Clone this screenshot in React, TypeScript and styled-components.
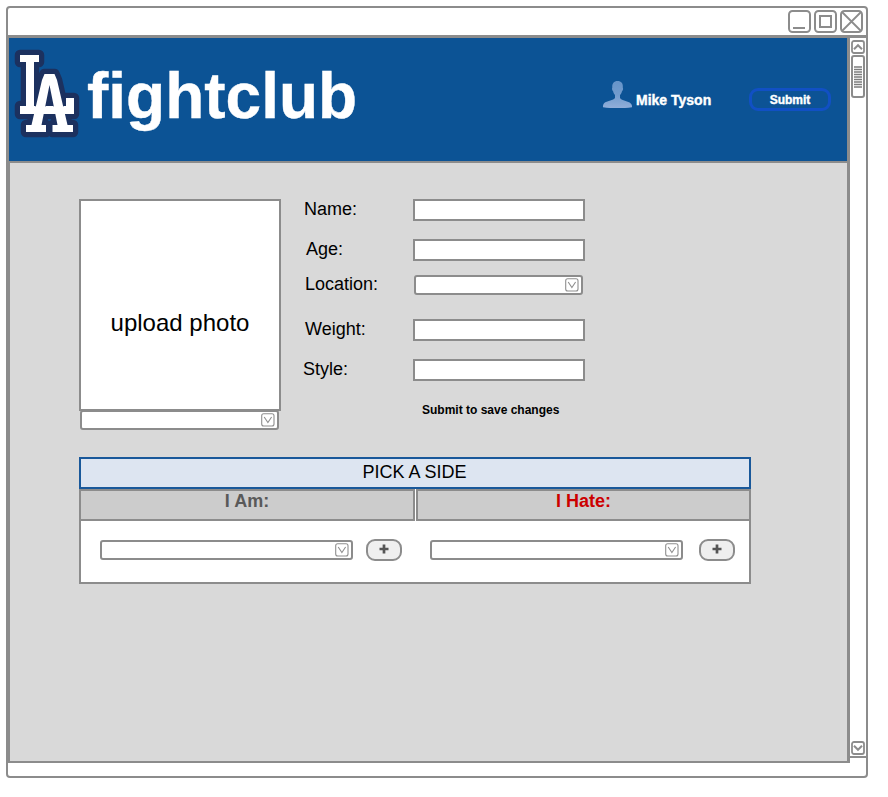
import React from 'react';
import styled, { createGlobalStyle } from 'styled-components';

const line = '#8c8c8c';

const GlobalStyle = createGlobalStyle`
  *, *::before, *::after { box-sizing: border-box; }
  html, body { margin: 0; background: #fff; }
  body { font-family: "Liberation Sans", Arial, sans-serif; color: #000; overflow: hidden; }
  svg { display: block; }
`;

const Window = styled.div`
  display: flex;
  flex-direction: column;
  width: 862px;
  height: 772px;
  margin: 6px 0 0 6px;
  border: 2px solid ${line};
  border-radius: 4px;
  background: #fff;
`;

const TitleBar = styled.div`
  display: flex;
  flex: none;
  justify-content: flex-end;
  gap: 3px;
  height: 30px;
  padding: 2px 3px 0 0;
  border-bottom: 3px solid ${line};
`;

const Frame = styled.div`
  display: flex;
  flex: none;
  align-items: flex-start;
`;

const Page = styled.div`
  display: flex;
  flex-direction: column;
  width: 842px;
  height: 725px;
  border: solid ${line};
  border-width: 0 3px 2px 2px;
  background: #d9d9d9;
`;

const Header = styled.header`
  display: flex;
  flex: none;
  height: 125px;
  margin-left: -1px;
  border-bottom: 2px solid ${line};
  background: #0c5395;
`;

const LogoSlot = styled.div`
  width: 66px;
  padding: 9px 0 0 5px;
`;

const Brand = styled.h1`
  width: 515px;
  margin: 21px 0 0 12px;
  color: #fff;
  font-size: 64px;
  line-height: 74px;
  font-weight: 700;
  -webkit-text-stroke: 0.4px #fff;
`;

const User = styled.div`
  display: flex;
  width: 147px;
  height: 36px;
  margin-top: 42px;
`;

const UserName = styled.span`
  margin: 11px 0 0 3px;
  color: #fff;
  font-size: 14px;
  line-height: 18px;
  font-weight: 700;
  white-space: nowrap;
  -webkit-text-stroke: 0.4px #fff;
`;

const SubmitButton = styled.button`
  width: 82px;
  height: 23px;
  margin: 50px 0 0;
  padding: 1px 0 0;
  border: 3px solid #1150c4;
  border-radius: 9px;
  background: transparent;
  color: #fff;
  font: 700 12px/17px "Liberation Sans", Arial, sans-serif;
  -webkit-text-stroke: 0.4px #fff;
`;

const Main = styled.main`
  display: flex;
  flex-direction: column;
  padding: 36px 0 0 69px;
`;

const Profile = styled.section`
  display: flex;
  height: 257.5px;
`;

const PhotoColumn = styled.div`
  display: flex;
  flex-direction: column;
  width: 202px;
`;

const Photo = styled.div`
  display: flex;
  justify-content: center;
  height: 212px;
  padding-top: 108px;
  border: 2px solid ${line};
  background: #fff;
  font-size: 24px;
  line-height: 28px;
`;

const SelectBox = styled.div<{ $width: number }>`
  display: flex;
  flex: none;
  justify-content: flex-end;
  align-items: center;
  width: ${(p) => p.$width}px;
  height: 20px;
  padding-right: 2px;
  border: 2px solid ${line};
  border-radius: 3px;
  background: #fff;
`;

const PhotoSelect = styled(SelectBox)`
  margin: -1px 0 0 1px;
`;

const Form = styled.div`
  display: flex;
  flex-direction: column;
  margin-left: 22px;
`;

const Row = styled.div<{ $height: number; $indent: number; $line?: number }>`
  display: grid;
  grid-template-columns: 110px auto;
  align-items: start;
  height: ${(p) => p.$height}px;

  > label {
    padding-left: ${(p) => p.$indent}px;
    font-size: 18px;
    line-height: ${(p) => p.$line ?? 20}px;
  }
`;

const TextField = styled.input`
  width: 171.5px;
  height: 22px;
  padding: 0 4px;
  border: 2px solid ${line};
  border-radius: 0;
  outline: none;
  background: #fff;
`;

const LocationSelect = styled(SelectBox)`
  margin-left: 1px;
`;

const Hint = styled.div`
  margin: 4px 0 0 119px;
  font-size: 12px;
  line-height: 14px;
  font-weight: 700;
`;

const Panel = styled.section`
  display: flex;
  flex-direction: column;
  width: 672px;
  height: 127px;
  background: #fff;
`;

const PanelTitle = styled.div`
  height: 32.5px;
  padding-right: 1px;
  border: 2px solid #19589a;
  background: #dde5f1;
  text-align: center;
  font-size: 18px;
  line-height: 27px;
`;

const SideHeaders = styled.div`
  display: grid;
  grid-template-columns: 336px 335px;
  gap: 1px;
`;

const SideHeader = styled.div<{ $color: string }>`
  height: 32px;
  border: 2px solid ${line};
  background: #ccc;
  color: ${(p) => p.$color};
  text-align: center;
  font-size: 18px;
  line-height: 20px;
  font-weight: 700;
`;

const Sides = styled.div`
  display: flex;
  flex: 1;
  align-items: flex-start;
  border: solid ${line};
  border-width: 0 2px 2px;
  padding: 18px 0 0 19px;
`;

const Side = styled.div<{ $gap: number; $width: number }>`
  display: flex;
  flex: none;
  align-items: center;
  gap: ${(p) => p.$gap}px;
  width: ${(p) => p.$width}px;
`;

const AddButton = styled.button`
  display: flex;
  flex: none;
  justify-content: center;
  width: 36px;
  height: 22px;
  padding: 3px 0 0;
  border: 2px solid ${line};
  border-radius: 9px;
  background: #efefef;
`;

const ScrollBar = styled.div`
  display: flex;
  flex-direction: column;
  align-items: center;
  width: 16px;
  height: 720px;
  padding: 2px 0 1px;
  border-bottom: 2px solid ${line};
`;

const Thumb = styled.div`
  display: flex;
  justify-content: center;
  width: 14px;
  height: 43px;
  margin: 1px 0 auto;
  padding-top: 9px;
  border: 2px solid ${line};
  border-radius: 3px;
`;

function LaLogo() {
  const letterL = 'M20 55H39V62H34V106H66V98H74V114H20V106H26V62H20Z';
  const letterA = 'M44.5 74H54.5L57 80L67.5 125H73V132H52.5V125H57.5L49.5 85L41.5 125H46V132H26V125H31.5L42 80Z';
  return (
    <svg width="66" height="92" viewBox="14 47 66 92" role="img" aria-label="LA">
      <g fill="#1c315f" stroke="#1c315f" strokeWidth="10.5" strokeLinejoin="round">
        <path d={letterL} />
        <path d={letterA} />
      </g>
      <path d={letterL} fill="#fff" />
      <path
        d={letterA}
        fill="#fff"
        stroke="#1c315f"
        strokeWidth="1"
        strokeLinejoin="round"
        paintOrder="stroke"
      />
      <path d="M20 106.5H74V114H20Z" fill="#fff" />
    </svg>
  );
}

function Avatar() {
  return (
    <svg width="31" height="30" viewBox="0 0 31 30" aria-hidden="true">
      <defs>
        <linearGradient id="avatar" x1="0" y1="0" x2="0" y2="1">
          <stop offset="0" stopColor="#6694c9" />
          <stop offset="0.5" stopColor="#719bcd" />
          <stop offset="1" stopColor="#91aed9" />
        </linearGradient>
      </defs>
      <path
        d="M15.5 1C12 1 9.9 3.4 10.3 7.5C9.7 8.4 10.2 10.5 11.1 11.2C11.5 13 12.2 14.2 13 15V18C11.5 20.3 5.5 21.1 2.9 22.6C1.2 23.8 .8 25.8 1 27.2C10 28.4 21 28.4 30 27.2C30.3 25.5 29.3 23.8 27.6 22.6C24.5 21.1 19.3 20.3 18 18V15C19.1 14 19.7 12.7 20 11.2C21 10.4 21.4 8.5 20.8 7.5C21.3 3.3 19.2 1 15.5 1Z"
        fill="url(#avatar)"
      />
    </svg>
  );
}

function WindowButton({ kind }: { kind: 'minimize' | 'maximize' | 'close' }) {
  return (
    <svg width="23" height="23" viewBox="0 0 23 23" fill="none" stroke={line} strokeWidth="2">
      <rect x="1" y="1" width="21" height="21" rx="3.5" />
      {kind === 'minimize' && <path d="M5 18H17" />}
      {kind === 'maximize' && <rect x="6" y="6" width="11" height="11" />}
      {kind === 'close' && <path d="M2 2L21 21M21 2L2 21" strokeWidth="1.8" />}
    </svg>
  );
}

function DropMark() {
  return (
    <svg width="14" height="14" viewBox="0 0 14 14" fill="none" stroke="#8f8f8f" strokeWidth="1.1">
      <rect x="0.7" y="0.7" width="12.3" height="12.3" rx="2" />
      <path d="M3.2 4L6.9 9.6L10.6 4" />
    </svg>
  );
}

function ScrollArrow({ down = false }: { down?: boolean }) {
  return (
    <svg width="14" height="14" viewBox="0 0 14 14" fill="none" stroke={line} strokeWidth="2">
      <rect x="1" y="1" width="12" height="12" rx="2" strokeWidth="1.8" />
      <path d={down ? 'M3 4.8L7 8.8L11 4.8' : 'M3 9.2L7 5.2L11 9.2'} />
    </svg>
  );
}

function Plus() {
  return (
    <svg width="10" height="10" viewBox="0 0 10 10" fill="none" stroke="#555" strokeWidth="2.7">
      <path d="M5 .5V9.5M.5 5H9.5" />
    </svg>
  );
}

export default function App() {
  return (
    <>
      <GlobalStyle />
      <Window>
        <TitleBar>
          <WindowButton kind="minimize" />
          <WindowButton kind="maximize" />
          <WindowButton kind="close" />
        </TitleBar>
        <Frame>
          <Page>
            <Header>
              <LogoSlot>
                <LaLogo />
              </LogoSlot>
              <Brand>fightclub</Brand>
              <User>
                <Avatar />
                <UserName>Mike Tyson</UserName>
              </User>
              <SubmitButton>Submit</SubmitButton>
            </Header>
            <Main>
              <Profile>
                <PhotoColumn>
                  <Photo>upload photo</Photo>
                  <PhotoSelect $width={199}>
                    <DropMark />
                  </PhotoSelect>
                </PhotoColumn>
                <Form>
                  <Row $height={40} $indent={1}>
                    <label htmlFor="name">Name:</label>
                    <TextField id="name" />
                  </Row>
                  <Row $height={36} $indent={3}>
                    <label htmlFor="age">Age:</label>
                    <TextField id="age" />
                  </Row>
                  <Row $height={44} $indent={2} $line={18}>
                    <label>Location:</label>
                    <LocationSelect $width={169}>
                      <DropMark />
                    </LocationSelect>
                  </Row>
                  <Row $height={40} $indent={2}>
                    <label htmlFor="weight">Weight:</label>
                    <TextField id="weight" />
                  </Row>
                  <Row $height={40} $indent={0}>
                    <label htmlFor="style">Style:</label>
                    <TextField id="style" />
                  </Row>
                  <Hint>Submit to save changes</Hint>
                </Form>
              </Profile>
              <Panel>
                <PanelTitle>PICK A SIDE</PanelTitle>
                <SideHeaders>
                  <SideHeader $color="#595959">I Am:</SideHeader>
                  <SideHeader $color="#cc0000">I Hate:</SideHeader>
                </SideHeaders>
                <Sides>
                  <Side $gap={13.5} $width={330}>
                    <SelectBox $width={252.5}>
                      <DropMark />
                    </SelectBox>
                    <AddButton aria-label="Add liked team">
                      <Plus />
                    </AddButton>
                  </Side>
                  <Side $gap={16.5} $width={305}>
                    <SelectBox $width={252.5}>
                      <DropMark />
                    </SelectBox>
                    <AddButton aria-label="Add hated team">
                      <Plus />
                    </AddButton>
                  </Side>
                </Sides>
              </Panel>
            </Main>
          </Page>
          <ScrollBar>
            <ScrollArrow />
            <Thumb>
              <svg width="8" height="22" viewBox="0 0 8 22" stroke="#7c7c7c" strokeWidth="1.4">
                <path d="M0 1H8M0 3.5H8M0 6H8M0 8.5H8M0 11H8M0 13.5H8M0 16H8M0 18.5H8M0 21H8" />
              </svg>
            </Thumb>
            <ScrollArrow down />
          </ScrollBar>
        </Frame>
      </Window>
    </>
  );
}
